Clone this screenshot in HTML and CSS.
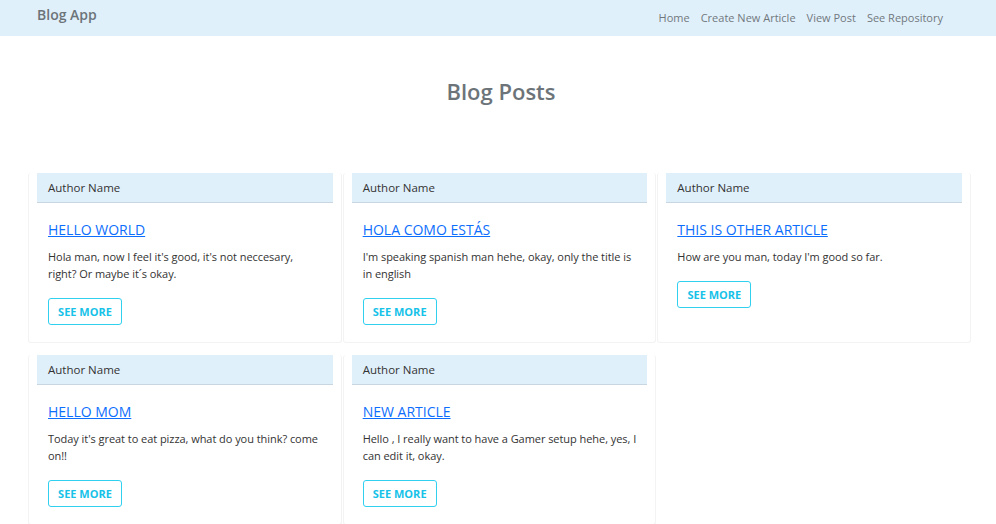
FILE: index.html
```html
<!DOCTYPE html>
<html lang="en">
<head>
<meta charset="utf-8">
<title>Blog App</title>
<link rel="stylesheet" href="styles.css">
</head>
<body>
<nav class="navbar">
  <a class="brand" href="#">Blog App</a>
  <ul class="nav-links">
    <li><a href="#">Home</a></li>
    <li><a href="#">Create New Article</a></li>
    <li><a href="#">View Post</a></li>
    <li><a href="#">See Repository</a></li>
  </ul>
</nav>
<main class="main">
  <h1 class="page-title">Blog Posts</h1>
  <div class="grid">
    <div class="col">
      <div class="card">
        <div class="card-header">Author Name</div>
        <div class="card-body">
          <a class="card-title" href="#">HELLO WORLD</a>
          <p class="card-text">Hola man, now I feel it's good, it's not neccesary, right? Or maybe it´s okay.</p>
          <a class="btn" href="#">SEE MORE</a>
        </div>
      </div>
    </div>
    <div class="col">
      <div class="card">
        <div class="card-header">Author Name</div>
        <div class="card-body">
          <a class="card-title" href="#">HOLA COMO ESTÁS</a>
          <p class="card-text">I'm speaking spanish man hehe, okay, only the title is in english</p>
          <a class="btn" href="#">SEE MORE</a>
        </div>
      </div>
    </div>
    <div class="col">
      <div class="card">
        <div class="card-header">Author Name</div>
        <div class="card-body">
          <a class="card-title" href="#">THIS IS OTHER ARTICLE</a>
          <p class="card-text">How are you man, today I'm good so far.</p>
          <a class="btn" href="#">SEE MORE</a>
        </div>
      </div>
    </div>
    <div class="col">
      <div class="card">
        <div class="card-header">Author Name</div>
        <div class="card-body">
          <a class="card-title" href="#">HELLO MOM</a>
          <p class="card-text">Today it's great to eat pizza, what do you think? come on!!</p>
          <a class="btn" href="#">SEE MORE</a>
        </div>
      </div>
    </div>
    <div class="col">
      <div class="card">
        <div class="card-header">Author Name</div>
        <div class="card-body">
          <a class="card-title" href="#">NEW ARTICLE</a>
          <p class="card-text">Hello , I really want to have a Gamer setup hehe, yes, I can edit it, okay.</p>
          <a class="btn" href="#">SEE MORE</a>
        </div>
      </div>
    </div>
  </div>
</main>
</body>
</html>
```
FILE: styles.css
```css
* { box-sizing: border-box; }
html, body { margin: 0; padding: 0; }
body {
  font-family: "Open Sans", "Noto Sans", sans-serif;
  color: #212529;
  background: #fff;
}
.navbar {
  height: 36px;
  background: #e0f0fb;
  display: flex;
  align-items: center;
  justify-content: space-between;
  padding: 0 53px 7px 37px;
}
.brand {
  font-size: 14px;
  font-weight: 600;
  color: #6c7479;
  text-decoration: none;
}
.nav-links {
  list-style: none;
  margin: 0;
  padding: 2px 0 0;
  display: flex;
  gap: 11px;
}
.nav-links a {
  font-size: 11px;
  color: #71787d;
  text-decoration: none;
}
.main { padding: 0 25px 0 28px; }
.page-title {
  margin: 40px 0 0;
  text-align: center;
  font-size: 22px;
  font-weight: 600;
  color: #6c7479;
  line-height: 30px;
  padding-left: 3px;
}
.grid {
  margin-top: 67px;
  display: grid;
  grid-template-columns: repeat(3, 1fr);
  column-gap: 1px;
  row-gap: 12px;
}
.col {
  border: 1px solid #f3f3f3;
  border-top: 0;
  border-radius: 3px;
  padding: 0 8px 17px;
}
.card { display: flex; flex-direction: column; }
.card-header {
  background: #e0f0fb;
  border-bottom: 1px solid #c8d6e2;
  height: 30px;
  padding: 0 11px;
  font-size: 11.5px;
  line-height: 29px;
  color: #333;
}
.card-body {
  padding: 17px 11px 0;
  display: flex;
  flex-direction: column;
  align-items: flex-start;
}
.card-title {
  color: #0d6efd;
  font-size: 14px;
  line-height: 20px;
  text-decoration: underline;
}
.card-text {
  margin: 8px 0 16px;
  font-size: 11px;
  letter-spacing: -0.05px;
  line-height: 17px;
  color: #333;
}
.btn {
  display: inline-block;
  height: 27px;
  width: 74px;
  border: 1px solid #2fd0f0;
  border-radius: 3px;
  color: #17c2e8;
  font-size: 11px;
  font-weight: 700;
  line-height: 25px;
  text-align: center;
  text-decoration: none;
}
```
